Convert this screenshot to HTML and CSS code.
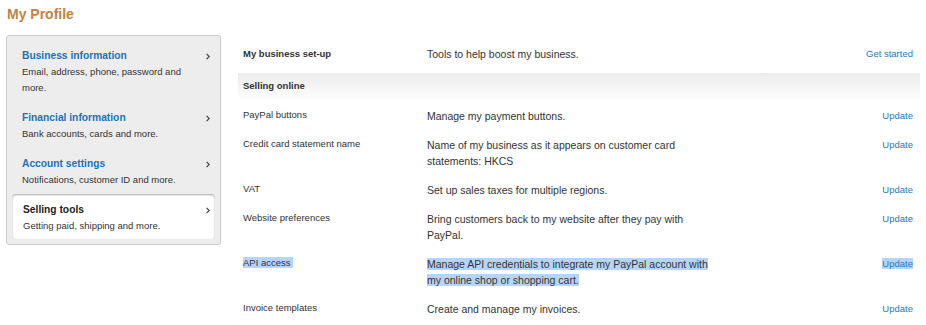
FILE: index.html
```html
<!DOCTYPE html>
<html lang="en">

<head>
    <meta charset="UTF-8">
    <meta name="viewport" content="width=device-width, initial-scale=1.0">
    <title>My Profile</title>
    <link rel="stylesheet" href="styles.css">
</head>

<body>

    <h1 class="page-title">My Profile</h1>

    <div class="layout">
        <div class="side-nav">
            <div class="nav-item">
                <div class="nav-head">
                    <span class="nav-title">Business information</span>
                    <svg class="chev" width="4" height="7" viewBox="0 0 4 7"><path d="M0.6 0.8l2.6 2.7-2.6 2.7" fill="none" stroke="#444" stroke-width="1.2"/></svg>
                </div>
                <div class="nav-desc">Email, address, phone, password and more.</div>
            </div>
            <div class="nav-item">
                <div class="nav-head">
                    <span class="nav-title">Financial information</span>
                    <svg class="chev" width="4" height="7" viewBox="0 0 4 7"><path d="M0.6 0.8l2.6 2.7-2.6 2.7" fill="none" stroke="#444" stroke-width="1.2"/></svg>
                </div>
                <div class="nav-desc">Bank accounts, cards and more.</div>
            </div>
            <div class="nav-item">
                <div class="nav-head">
                    <span class="nav-title">Account settings</span>
                    <svg class="chev" width="4" height="7" viewBox="0 0 4 7"><path d="M0.6 0.8l2.6 2.7-2.6 2.7" fill="none" stroke="#444" stroke-width="1.2"/></svg>
                </div>
                <div class="nav-desc">Notifications, customer ID and more.</div>
            </div>
            <div class="nav-item active">
                <div class="nav-head">
                    <span class="nav-title">Selling tools</span>
                    <svg class="chev" width="4" height="7" viewBox="0 0 4 7"><path d="M0.6 0.8l2.6 2.7-2.6 2.7" fill="none" stroke="#444" stroke-width="1.2"/></svg>
                </div>
                <div class="nav-desc">Getting paid, shipping and more.</div>
            </div>
        </div>

        <div class="settings">
            <div class="row first">
                <div class="label strong">My business set-up</div>
                <div class="desc">Tools to help boost my business.</div>
                <a class="action" href="#">Get started</a>
            </div>

            <div class="section">Selling online</div>

            <div class="row">
                <div class="label">PayPal buttons</div>
                <div class="desc">Manage my payment buttons.</div>
                <a class="action" href="#">Update</a>
            </div>
            <div class="row">
                <div class="label">Credit card statement name</div>
                <div class="desc">Name of my business as it appears on customer card statements: HKCS</div>
                <a class="action" href="#">Update</a>
            </div>
            <div class="row">
                <div class="label">VAT</div>
                <div class="desc">Set up sales taxes for multiple regions.</div>
                <a class="action" href="#">Update</a>
            </div>
            <div class="row">
                <div class="label">Website preferences</div>
                <div class="desc">Bring customers back to my website after they pay with PayPal.</div>
                <a class="action" href="#">Update</a>
            </div>
            <div class="row">
                <div class="label"><span class="sel">API access&nbsp;</span></div>
                <div class="desc"><span class="sel">Manage API credentials to integrate my PayPal account with my online shop or shopping cart.</span></div>
                <a class="action" href="#"><span class="sel">Update</span></a>
            </div>
            <div class="row">
                <div class="label">Invoice templates</div>
                <div class="desc">Create and manage my invoices.</div>
                <a class="action" href="#">Update</a>
            </div>
        </div>
    </div>

</body>

</html>
```

FILE: styles.css
```css
body {
    font-family: 'Liberation Sans', Arial, sans-serif;
    margin: 0;
    padding: 0 6px;
    background-color: #fff;
    color: #333;
}

.page-title {
    margin: 0;
    padding-top: 6px;
    height: 29px;
    font-size: 14px;
    line-height: 17px;
    color: #c4813f;
    padding-left: 1px;
}

.layout {
    display: flex;
    align-items: flex-start;
    gap: 17px;
}

/* left menu */
.side-nav {
    width: 213px;
    flex-shrink: 0;
    background-color: #ededed;
    border: 1px solid #cdcdcd;
    border-radius: 3px;
    padding-bottom: 5px;
}

.nav-item {
    padding: 12px 10px 2px 15px;
}

.nav-head {
    display: flex;
    justify-content: space-between;
    align-items: center;
}

.nav-title {
    font-size: 10.25px;
    font-weight: bold;
    line-height: 16px;
    color: #1d72b6;
}

.nav-desc {
    font-size: 9.5px;
    line-height: 16px;
    color: #333;
    padding-right: 12px;
}

.nav-item.active {
    margin: 4px 5px 0;
    padding: 8px 5px 5px 11px;
    background-color: #fff;
    border-radius: 4px;
    box-shadow: inset 0 1px 2px rgba(0, 0, 0, 0.35);
}

.nav-item.active .nav-title {
    color: #222;
}

/* right list */
.settings {
    flex: 1;
    margin-top: 4px;
}

.row {
    display: grid;
    grid-template-columns: 184px 295px 1fr;
    padding: 7px 7px 6px 5px;
}

.row.first {
    padding-bottom: 11px;
}

.label {
    font-size: 9.5px;
    line-height: 14px;
    color: #333;
}

.label.strong {
    font-weight: bold;
    line-height: 16px;
}

.desc {
    font-size: 10.5px;
    line-height: 16px;
    color: #333;
}

.action {
    justify-self: end;
    font-size: 9.5px;
    line-height: 16px;
    color: #2b78b7;
    text-decoration: none;
}

.section {
    height: 28px;
    line-height: 26px;
    padding-left: 5px;
    font-size: 9.5px;
    font-weight: bold;
    color: #333;
    background: linear-gradient(#ebebeb, #fff);
}

.sel {
    background-color: #b5d5fc;
}
```
